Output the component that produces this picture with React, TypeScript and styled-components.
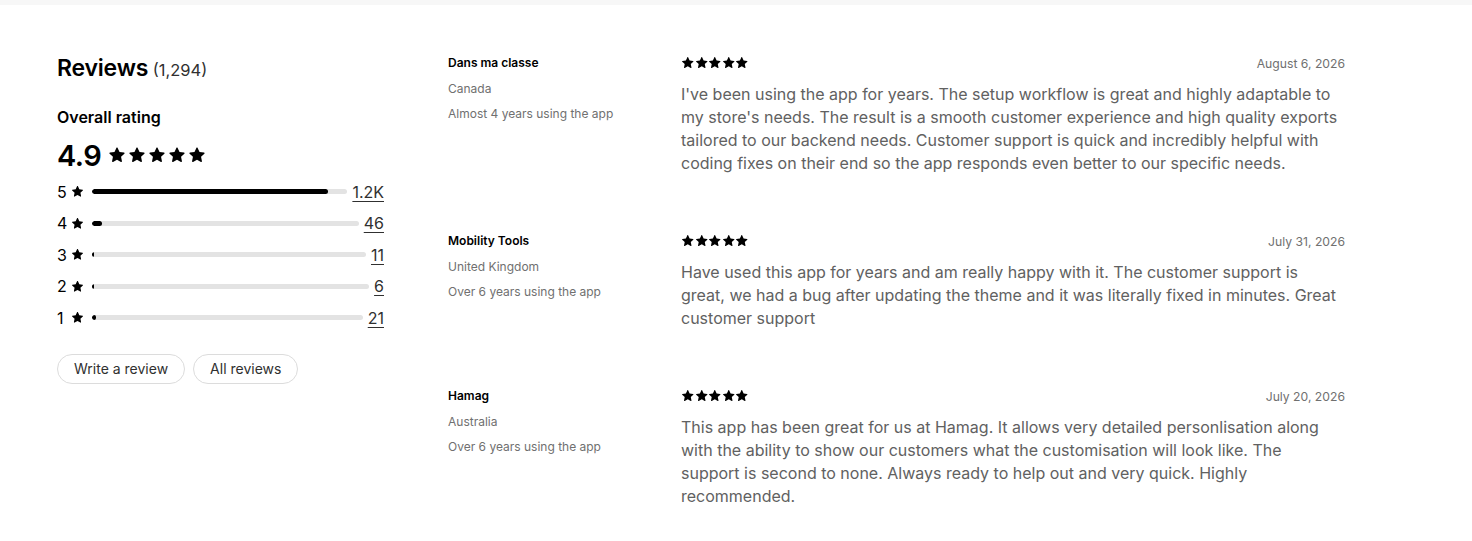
import React from "react";
import styled, { createGlobalStyle } from "styled-components";

const text = "#303030";
const muted = "#616161";
const light = "#707070";

const GlobalStyle = createGlobalStyle`
  body {
    margin: 0;
    background: #ffffff;
    font-family: Inter, "Noto Sans", sans-serif;
    color: ${text};
  }
`;

interface Review {
  name: string;
  country: string;
  usage: string;
  date: string;
  body: string;
}

const reviews: Review[] = [
  {
    name: "Dans ma classe",
    country: "Canada",
    usage: "Almost 4 years using the app",
    date: "August 6, 2026",
    body: "I've been using the app for years. The setup workflow is great and highly adaptable to my store's needs. The result is a smooth customer experience and high quality exports tailored to our backend needs. Customer support is quick and incredibly helpful with coding fixes on their end so the app responds even better to our specific needs.",
  },
  {
    name: "Mobility Tools",
    country: "United Kingdom",
    usage: "Over 6 years using the app",
    date: "July 31, 2026",
    body: "Have used this app for years and am really happy with it. The customer support is great, we had a bug after updating the theme and it was literally fixed in minutes. Great customer support",
  },
  {
    name: "Hamag",
    country: "Australia",
    usage: "Over 6 years using the app",
    date: "July 20, 2026",
    body: "This app has been great for us at Hamag. It allows very detailed personlisation along with the ability to show our customers what the customisation will look like. The support is second to none. Always ready to help out and very quick. Highly recommended.",
  },
];

const distribution = [
  { stars: 5, label: "1.2K", share: 0.926 },
  { stars: 4, label: "46", share: 0.036 },
  { stars: 3, label: "11", share: 0.009 },
  { stars: 2, label: "6", share: 0.004 },
  { stars: 1, label: "21", share: 0.016 },
];

const TopStrip = styled.div`
  height: 5px;
  background: #f7f7f7;
`;

const Page = styled.div`
  display: grid;
  grid-template-columns: 391px 233px 664px;
  padding: 47px 0 0 57px;
`;

const Summary = styled.aside`
  display: flex;
  flex-direction: column;
  width: 327px;
`;

const Heading = styled.h2`
  margin: 0;
  font-size: 23px;
  line-height: 32px;
  font-weight: 600;
  color: #000;
  letter-spacing: -0.2px;

  span {
    margin-left: -1px;
    font-size: 16.5px;
    font-weight: 400;
    color: ${text};
    letter-spacing: 0;
  }
`;

const SubHeading = styled.h3`
  margin: 19px 0 0;
  font-size: 16px;
  line-height: 24px;
  font-weight: 600;
  color: #000;
`;

const Score = styled.div`
  display: flex;
  align-items: center;
  gap: 7px;
  margin-top: 6px;
  height: 40px;

  strong {
    font-size: 29px;
    font-weight: 600;
    color: #000;
    letter-spacing: -0.5px;
  }
`;

const StarRow = styled.div<{ $gap: number }>`
  display: flex;
  gap: ${(p) => p.$gap}px;
  align-items: center;
`;

const Bars = styled.div`
  display: flex;
  flex-direction: column;
  margin-top: 1px;
`;

const BarRow = styled.div`
  display: flex;
  align-items: center;
  height: 31.5px;
  font-size: 16px;
  color: #000;
`;

const BarLabel = styled.span`
  width: 14px;
`;

const Track = styled.div`
  flex: 1;
  height: 5px;
  margin: 0 5px 0 8px;
  border-radius: 3px;
  background: #e3e3e3;
  overflow: hidden;
`;

const Fill = styled.div`
  height: 100%;
  min-width: 2px;
  border-radius: 3px;
  background: #000;
`;

const Count = styled.a`
  color: ${text};
  text-decoration: underline;
  text-underline-offset: 3px;
  text-decoration-thickness: 1px;
`;

const Actions = styled.div`
  display: flex;
  gap: 8px;
  margin-top: 20px;
`;

const PillButton = styled.button`
  height: 30px;
  padding: 0 16px;
  border: 1px solid #dcdcdc;
  border-radius: 15px;
  background: #fff;
  font-family: inherit;
  font-size: 14px;
  color: ${text};
`;

const ReviewList = styled.div`
  grid-column: 2 / 4;
  display: flex;
  flex-direction: column;
  gap: 56px;
  padding-top: 1px;
`;

const ReviewItem = styled.article`
  display: grid;
  grid-template-columns: 233px 664px;
`;

const Author = styled.div`
  display: flex;
  flex-direction: column;
  gap: 6.5px;
  font-size: 12px;
  line-height: 19px;
`;

const AuthorName = styled.div`
  font-weight: 600;
  color: #000;
`;

const Meta = styled.div`
  color: ${light};
`;

const Content = styled.div`
  display: flex;
  flex-direction: column;
`;

const ContentHead = styled.div`
  display: flex;
  justify-content: space-between;
  align-items: center;
  height: 20px;
  margin-bottom: 10px;
`;

const DateText = styled.span`
  font-size: 12.2px;
  color: ${light};
`;

const Body = styled.p`
  margin: 0;
  max-width: 660px;
  font-size: 16px;
  line-height: 23px;
  color: ${muted};
`;

const Star = ({ size }: { size: number }) => (
  <svg width={size} height={size} viewBox="0 0 20 20" aria-hidden="true">
    <path
      fill="#000"
      d="M10 1.6c.3 0 .6.2.7.5l2.1 4.6 5 .6c.6.1.9.9.4 1.3l-3.7 3.4 1 5c.1.6-.5 1.1-1.1.8L10 15.3l-4.4 2.5c-.6.3-1.2-.2-1.1-.8l1-5L1.8 8.6c-.5-.4-.2-1.2.4-1.3l5-.6 2.1-4.6c.1-.3.4-.5.7-.5z"
    />
  </svg>
);

const Stars = ({ size, gap }: { size: number; gap: number }) => (
  <StarRow $gap={gap}>
    {[0, 1, 2, 3, 4].map((i) => (
      <Star key={i} size={size} />
    ))}
  </StarRow>
);

const App = () => (
  <>
    <GlobalStyle />
    <TopStrip />
    <Page>
      <Summary>
        <Heading>
          Reviews <span>(1,294)</span>
        </Heading>
        <SubHeading>Overall rating</SubHeading>
        <Score>
          <strong>4.9</strong>
          <Stars size={18} gap={2} />
        </Score>
        <Bars>
          {distribution.map((row) => (
            <BarRow key={row.stars}>
              <BarLabel>{row.stars}</BarLabel>
              <Star size={13} />
              <Track>
                <Fill style={{ width: `${row.share * 100}%` }} />
              </Track>
              <Count href="#">{row.label}</Count>
            </BarRow>
          ))}
        </Bars>
        <Actions>
          <PillButton>Write a review</PillButton>
          <PillButton>All reviews</PillButton>
        </Actions>
      </Summary>
      <ReviewList>
        {reviews.map((r) => (
          <ReviewItem key={r.name}>
            <Author>
              <AuthorName>{r.name}</AuthorName>
              <Meta>{r.country}</Meta>
              <Meta>{r.usage}</Meta>
            </Author>
            <Content>
              <ContentHead>
                <Stars size={13.5} gap={0} />
                <DateText>{r.date}</DateText>
              </ContentHead>
              <Body>{r.body}</Body>
            </Content>
          </ReviewItem>
        ))}
      </ReviewList>
    </Page>
  </>
);

export default App;
